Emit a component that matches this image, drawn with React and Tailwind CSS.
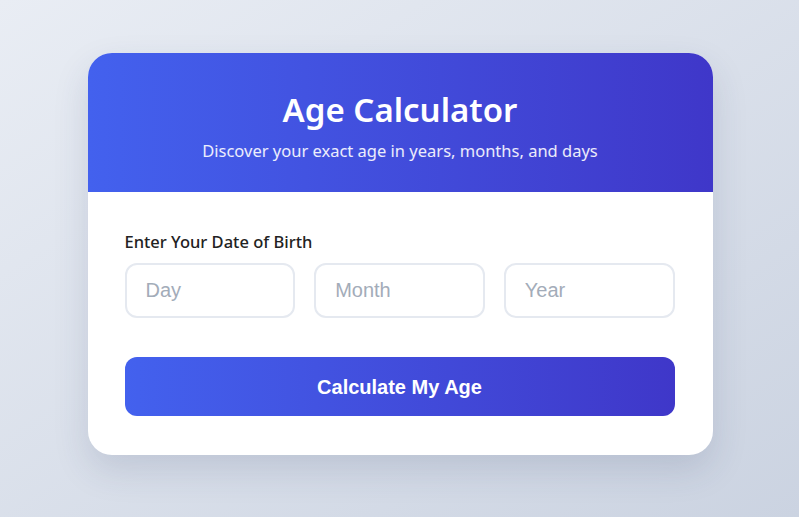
export default function App() {
  return (
    <div className="min-h-screen w-full bg-gradient-to-br from-[#e9edf4] to-[#cbd3e1] flex justify-center pt-[53px] pl-[1px]" style={{ fontFamily: '"Noto Sans", sans-serif' }}>
      <div className="w-[625px] h-[402px] bg-white rounded-[24px] overflow-hidden shadow-[0_15px_35px_rgba(50,60,100,0.15)]">
        <div className="h-[139px] bg-gradient-to-r from-[#4361ee] to-[#3f37c9] flex flex-col items-center pt-[37px] text-white">
          <h1 className="text-[33px] font-semibold leading-[40px]">Age Calculator</h1>
          <p className="text-[16.5px] leading-[24px] mt-[9px] text-white/90">Discover your exact age in years, months, and days</p>
        </div>
        <div className="pl-[37px] pr-[38px] pt-[38px]">
          <label className="block text-[16.5px] font-medium text-[#222] leading-[24px]">Enter Your Date of Birth</label>
          <div className="grid grid-cols-3 gap-[19px] mt-[9px]">
            {["Day", "Month", "Year"].map((p) => (
              <input key={p} placeholder={p} className="h-[55px] w-full rounded-[12px] border-2 border-[#e5e9f0] px-[19px] text-[20px] placeholder-[#a3acb9] outline-none" style={{ fontFamily: '"Liberation Sans", Arial, sans-serif' }} />
            ))}
          </div>
          <button className="mt-[39px] w-full h-[59px] rounded-[12px] bg-gradient-to-r from-[#4361ee] to-[#3f37c9] text-white text-[20px] font-bold" style={{ fontFamily: '"Liberation Sans", Arial, sans-serif' }}>Calculate My Age</button>
        </div>
      </div>
    </div>
  );
}
